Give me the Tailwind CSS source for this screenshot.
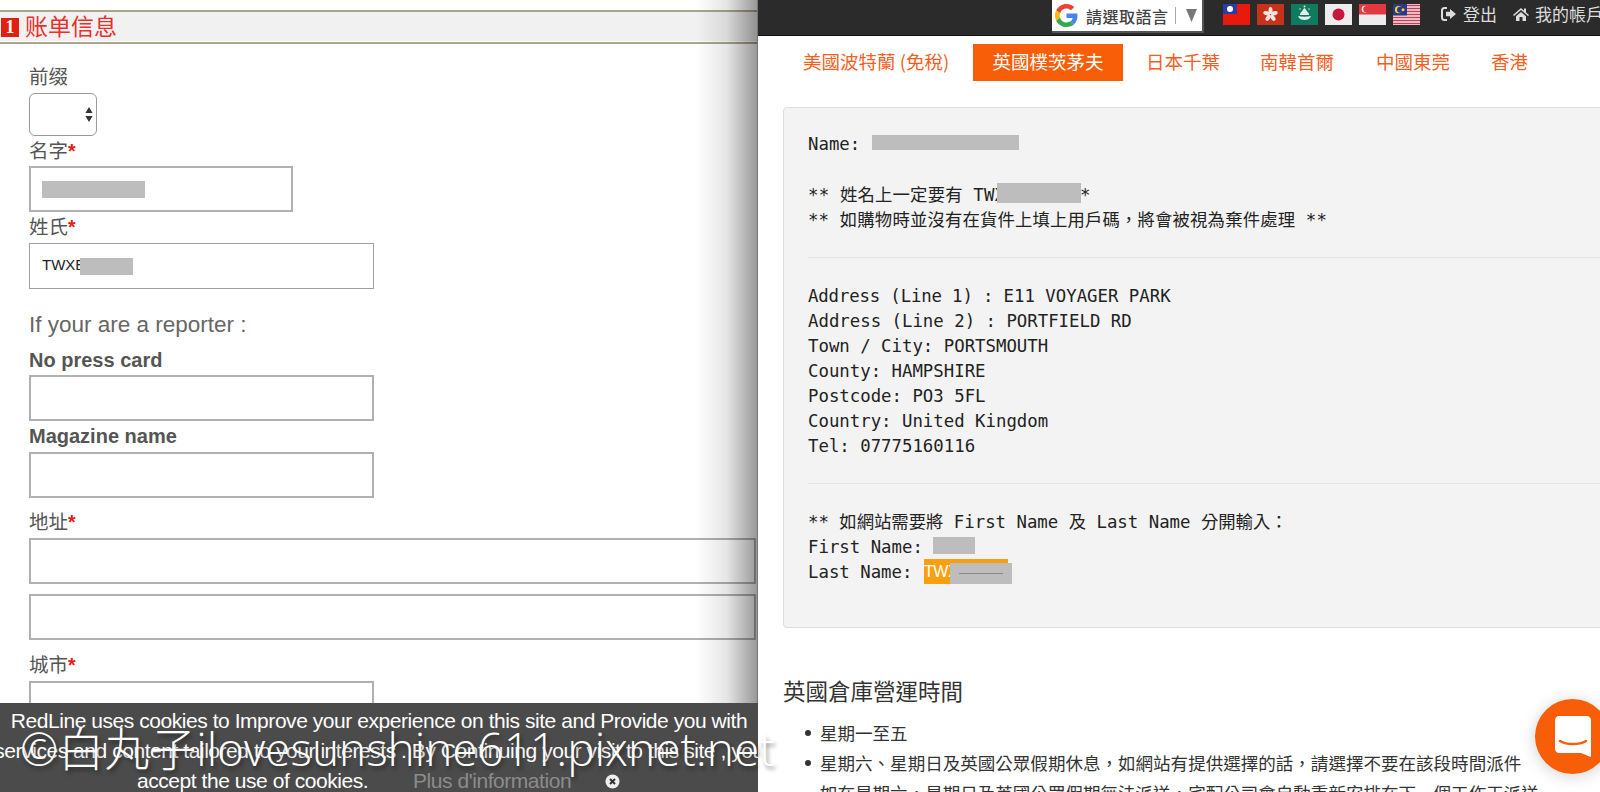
<!DOCTYPE html>
<html lang="en">
<head>
  <meta charset="UTF-8" />
  <title>账单信息</title>
  <script src="https://cdn.jsdelivr.net/npm/@tailwindcss/browser@4"></script>
</head>
<body class="bg-white overflow-hidden">
  <div class="relative flex w-[1600px] h-[792px] overflow-hidden">

    <!-- Left: billing form -->
    <div class="relative w-[758px] h-full shrink-0 overflow-hidden bg-white font-['Liberation_Sans','Noto_Sans_CJK_SC',sans-serif] text-[#555]">
      <div class="mt-[10px] h-[34px] border-y-2 border-[#aaa68c] bg-[#f1f1f1] flex items-center pl-[1px] shadow-[inset_0_-1px_0_#fff]">
        <span class="w-[18px] h-[19px] bg-[#e3200f] text-white text-[18px] font-bold leading-[19px] text-center font-['Liberation_Serif',serif]">1</span>
        <span class="ml-[6px] text-[23px] leading-[30px] text-[#e9302a]">账单信息</span>
      </div>

      <div class="pl-[29px] pt-[18px]">
        <div class="h-[31px] text-[19.5px] leading-[30px]">前缀</div>
        <div class="w-[68px] h-[43px] border border-[#999] rounded-[6px] flex items-center justify-end pr-[3px]">
          <svg width="8" height="15" viewBox="0 0 8 15"><path d="M4 0l3.600 6H.4zM4 15L.4 9h7.200z" fill="#333"/></svg>
        </div>

        <div class="h-[30px] text-[19.5px] leading-[31px]">名字<b class="text-[#e3200f]">*</b></div>
        <div class="w-[264px] h-[46px] border-2 border-[#b0b0b0] pl-[11px] flex items-center">
          <span class="w-[103px] h-[17px] bg-[#bdbdbd]"></span>
        </div>

        <div class="h-[31px] text-[19.5px] leading-[30px]">姓氏<b class="text-[#e3200f]">*</b></div>
        <div class="w-[345px] h-[46px] border-[1.5px] border-[#a0a0a0] pl-[12px] flex items-center text-[15px] leading-[18px] text-[#222]">
          <span class="w-[38px] overflow-hidden -mt-[2px]">TWXE</span><span class="w-[53px] h-[17px] bg-[#bdbdbd]"></span>
        </div>

        <div class="mt-[22px] h-[28px] text-[22.5px] leading-[28px] text-[#666]">If your are a reporter :</div>
        <div class="mt-[7px] h-[29px] text-[20px] leading-[28px] font-bold">No press card</div>
        <div class="w-[345px] h-[46px] border-2 border-[#b0b0b0]"></div>
        <div class="h-[31px] text-[20px] leading-[30px] font-bold">Magazine name</div>
        <div class="w-[345px] h-[46px] border-2 border-[#b0b0b0]"></div>

        <div class="h-[40px] pt-[9px] text-[19.5px] leading-[30px]">地址<b class="text-[#e3200f]">*</b></div>
        <div class="w-[727px] h-[46px] border-2 border-[#b0b0b0]"></div>
        <div class="mt-[10px] w-[727px] h-[46px] border-2 border-[#b0b0b0]"></div>
        <div class="h-[41px] pt-[10px] text-[19.5px] leading-[30px]">城市<b class="text-[#e3200f]">*</b></div>
        <div class="w-[345px] h-[46px] border-2 border-[#b0b0b0]"></div>
      </div>

      <!-- shadow from the right panel -->
      <div class="absolute top-0 right-0 w-[62px] h-full bg-gradient-to-r from-black/0 via-black/10 to-black/40 border-r border-[#777]"></div>

      <!-- cookie bar -->
      <div class="absolute left-0 right-0 top-[703px] h-[89px] bg-[#4b4b4b] text-white text-center text-[21px] tracking-[-0.45px] leading-[30px] pt-[3px] whitespace-nowrap">
        <div>RedLine uses cookies to Improve your experience on this site and Provide you with</div>
        <div class="flex justify-center"><span class="shrink-0">services and content tailored to your interests . By Continuing your visit to this site , you</span></div>
        <div class="relative">
          <span class="absolute left-[137px]">accept the use of cookies.</span>
          <span class="absolute left-[413px] text-[#8b8b8b]">Plus d'information</span>
          <svg class="absolute left-[605px] top-[8px]" width="15" height="15" viewBox="0 0 15 15"><circle cx="7.500" cy="7.500" r="7" fill="#eee"/><path d="M5 5l5 5M10 5l-5 5" stroke="#333" stroke-width="2"/></svg>
        </div>
      </div>
    </div>

    <!-- Right: warehouse addresses -->
    <div class="flex-1 min-w-0 h-full overflow-hidden bg-white font-['DejaVu_Sans','Noto_Sans_CJK_TC',sans-serif] text-[#333]">
      <div class="h-[36px] bg-[#2b2b2b] border-b border-[#111] flex items-start text-[#ddd] text-[17px] whitespace-nowrap">
        <div class="ml-[294px] w-[152px] shrink-0 h-[33px] bg-white border-r-2 border-b-2 border-[#555] flex items-center pl-[3px] text-[#444] text-[16px] font-['Noto_Sans_CJK_TC',sans-serif] font-medium">
          <svg width="23" height="23" viewBox="0 0 48 48"><path fill="#EA4335" d="M24 9.500c3.500 0 6.700 1.200 9.200 3.600l6.900-6.900C35.900 2.400 30.500 0 24 0 14.600 0 6.500 5.400 2.600 13.200l8 6.200C12.400 13.700 17.700 9.500 24 9.500z"/><path fill="#4285F4" d="M46.900 24.500c0-1.600-.2-3.100-.4-4.500H24v9h12.900c-.6 3-2.200 5.500-4.700 7.200l7.700 6c4.500-4.200 7-10.300 7-17.700z"/><path fill="#FBBC05" d="M10.500 28.600c-.5-1.400-.8-3-.8-4.600s.3-3.200.8-4.600l-8-6.200C.9 16.500 0 20.100 0 24s.9 7.500 2.600 10.800l7.900-6.200z"/><path fill="#34A853" d="M24 48c6.500 0 11.900-2.100 15.900-5.800l-7.700-6c-2.100 1.400-4.900 2.300-8.200 2.300-6.300 0-11.600-4.200-13.500-10l-8 6.200C6.500 42.600 14.600 48 24 48z"/></svg>
          <span class="ml-[8px] tracking-[0.5px]">請選取語言</span>
          <span class="ml-[6px] w-px h-[17px] bg-[#aaa]"></span>
          <svg class="ml-[10px]" width="11" height="13" viewBox="0 0 11 13"><path d="M0 0h11L5.500 13z" fill="#777"/></svg>
        </div>

        <div class="ml-[19px] mt-[4px] shrink-0 flex gap-[7px]">
          <!-- TW -->
          <svg class="w-[27px] h-[21px]" viewBox="0 0 27 21"><rect width="27" height="21" fill="#e81a0c"/><rect width="14" height="10" fill="#2a3ca8"/><circle cx="7" cy="5" r="3" fill="#fff"/></svg>
          <!-- HK -->
          <svg class="w-[27px] h-[21px]" viewBox="0 0 27 21"><rect width="27" height="21" fill="#c8321a"/><g fill="#f3e4df"><ellipse cx="13.500" cy="6.500" rx="2" ry="3.500"/><ellipse cx="13.500" cy="6.500" rx="2" ry="3.500" transform="rotate(72 13.500 10.500)"/><ellipse cx="13.500" cy="6.500" rx="2" ry="3.500" transform="rotate(144 13.500 10.500)"/><ellipse cx="13.500" cy="6.500" rx="2" ry="3.500" transform="rotate(216 13.500 10.500)"/><ellipse cx="13.500" cy="6.500" rx="2" ry="3.500" transform="rotate(288 13.500 10.500)"/></g></svg>
          <!-- MO -->
          <svg class="w-[27px] h-[21px]" viewBox="0 0 27 21"><rect width="27" height="21" fill="#0e7a5e"/><path d="M7 12c4 1 9 1 13 0-1 3-4 4-6.500 4S8 15 7 12z" fill="#e4efe9"/><path d="M9 11c0-2 1-3 2-3.500.5-1.500 1.500-2.500 2.500-3.500 1 1 2 2 2.500 3.500 1 .5 2 1.500 2 3.500z" fill="#e4efe9"/><circle cx="13.500" cy="2.500" r="1" fill="#dde6c8"/><circle cx="9" cy="5" r=".8" fill="#dde6c8"/><circle cx="18" cy="5" r=".8" fill="#dde6c8"/></svg>
          <!-- JP -->
          <svg class="w-[27px] h-[21px]" viewBox="0 0 27 21"><rect width="27" height="21" fill="#ededed"/><circle cx="13.500" cy="10.500" r="6" fill="#c8163c"/></svg>
          <!-- SG -->
          <svg class="w-[27px] h-[21px]" viewBox="0 0 27 21"><rect width="27" height="21" fill="#ececec"/><rect width="27" height="10.500" fill="#e2383f"/><circle cx="6" cy="5.200" r="3.400" fill="#f7e4e4"/><circle cx="7.500" cy="5.200" r="3.200" fill="#e2383f"/></svg>
          <!-- MY -->
          <svg class="w-[27px] h-[21px]" viewBox="0 0 27 21"><rect width="27" height="21" fill="#ececec"/><path d="M0 1.500h27M0 4.500h27M0 7.500h27M0 10.500h27M0 13.500h27M0 16.500h27M0 19.500h27" stroke="#cf3a50" stroke-width="1.500"/><rect width="14" height="11.500" fill="#27398f"/><circle cx="5.500" cy="5.700" r="3.600" fill="#f5cf2d"/><circle cx="7" cy="5.700" r="3" fill="#27398f"/><circle cx="10" cy="5.700" r="1.500" fill="#f5cf2d"/></svg>
        </div>

        <div class="ml-[21px] mt-[3px] shrink-0 h-[22px] flex items-center font-['Noto_Sans_CJK_TC',sans-serif]">
          <svg width="16" height="14" viewBox="0 0 16 14"><path d="M6 1H3.500C2 1 1 2 1 3.500v7C1 12 2 13 3.500 13H6" fill="none" stroke="#ddd" stroke-width="2"/><path d="M9 2l6 5-6 5V9.200H5V4.800h4z" fill="#ddd"/></svg>
          <span class="ml-[6px]">登出</span>
          <svg class="ml-[16px]" width="16" height="14" viewBox="0 0 16 14"><path d="M8 1L0 8l1 1 7-6 7 6 1-1-3-2.600V1.500h-2v2.200zM3 9.200L8 5l5 4.200V14H9.500V10h-3v4H3z" fill="#ddd"/></svg>
          <span class="ml-[6px]">我的帳戶</span>
        </div>
      </div>

      <!-- warehouse tabs -->
      <div class="mt-[8px] pl-[45px] h-[37px] flex items-start leading-[35px] text-[18.500px] text-[#f45f1f] whitespace-nowrap font-['Noto_Sans_CJK_TC',sans-serif]">
        <span class="w-[149px]">美國波特蘭 (免稅)</span>
        <span class="ml-[21px] w-[150px] h-[37px] text-center bg-[#f85e08] text-white">英國樸茨茅夫</span>
        <span class="ml-[23px]">日本千葉</span>
        <span class="ml-[40px]">南韓首爾</span>
        <span class="ml-[42px]">中國東莞</span>
        <span class="ml-[41px]">香港</span>
      </div>

      <pre class="mt-[26px] ml-[25px] w-[900px] h-[521px] pt-[25px] pl-[24px] bg-[#f3f3f3] border border-[#ddd] rounded-[4px] text-[17.350px] leading-[25px] text-[#222] font-['DejaVu_Sans_Mono','Noto_Sans_CJK_TC',monospace]"><div class="relative -mt-[1px]">Name: <span class="absolute left-[64px] top-[3px] w-[147px] h-[15px] bg-[#bdbdbd]"></span></div><div class="h-[26px]"></div><div class="relative tracking-[0.2px]">** 姓名上一定要有 TWX<span class="absolute left-[189px] top-0 w-[84px] h-[20px] bg-[#bdbdbd]"></span><span class="absolute left-[272px]">*</span></div><div class="tracking-[0.17px]">** 如購物時並沒有在貨件上填上用戶碼，將會被視為棄件處理 **</div><hr class="mt-[24px] mb-[26px] border-[#e4e4e4]"/><div><span class="tracking-[-0.15px]">Address (Line 1) : </span>E11 VOYAGER PARK</div><div>Address (Line 2) : PORTFIELD RD</div><div>Town / City: PORTSMOUTH</div><div>County: HAMPSHIRE</div><div>Postcode: PO3 5FL</div><div>Country: United Kingdom</div><div>Tel: 07775160116</div><hr class="mt-[24px] mb-[26px] border-[#e4e4e4]"/><div>** 如網站需要將 First Name 及 Last Name 分開輸入：</div><div class="relative">First Name: <span class="absolute left-[125px] top-[2px] w-[42px] h-[17px] bg-[#bdbdbd]"></span></div><div class="relative">Last Name: <span class="absolute left-[116px] top-[-1px] w-[84px] h-[25px] bg-[#f89f10] text-white text-[16px] tracking-[-0.5px] overflow-hidden font-['Liberation_Sans',sans-serif]">TWX</span><span class="absolute left-[142px] top-[3px] w-[62px] h-[21px] bg-[#bdbdbd] flex items-center justify-center"><span class="w-[44px] h-px bg-[#888]"></span></span></div></pre>

      <h3 class="mt-[47px] ml-[25px] text-[22.500px] leading-[30px] text-[#333] font-['Noto_Sans_CJK_TC',sans-serif]">英國倉庫營運時間</h3>
      <ul class="mt-[13px] ml-[62px] text-[17.550px] leading-[30px] text-[#333] font-['Noto_Sans_CJK_TC',sans-serif] whitespace-nowrap">
        <li class="relative"><span class="absolute -left-[15px] top-[12px] w-[6px] h-[6px] rounded-full bg-[#333]"></span>星期一至五</li>
        <li class="relative"><span class="absolute -left-[15px] top-[12px] w-[6px] h-[6px] rounded-full bg-[#333]"></span>星期六、星期日及英國公眾假期休息，如網站有提供選擇的話，請選擇不要在該段時間派件</li>
        <li>如在星期六，星期日及英國公眾假期無法派送，宅配公司會自動重新安排在下一個工作天派送</li>
      </ul>
    </div>

    <!-- watermark over the screenshot -->
    <div class="absolute left-[20px] top-[718px] text-[46px] leading-[60px] font-light text-white whitespace-nowrap font-['Open_Sans','Noto_Sans_CJK_TC',sans-serif] [text-shadow:2px_3px_4px_rgba(0,0,0,0.45)]">©白丸子ilovesunshine611.pixnet.net</div>

    <!-- chat button -->
    <div class="absolute left-[1535px] top-[699px] w-[75px] h-[75px] rounded-full bg-[#f85e08] shadow-[0_2px_16px_rgba(0,0,0,0.18)]">
      <svg class="absolute left-[20px] top-[17px]" width="36" height="41" viewBox="0 0 36 41"><path d="M4 0h28c2 0 4 2 4 4v37l-10-4H4c-2 0-4-2-4-4V4c0-2 2-4 4-4z" fill="#fff"/><path d="M5 25c7 4 19 4 26 0" fill="none" stroke="#f85e08" stroke-width="2.500" stroke-linecap="round"/></svg>
    </div>
  </div>
</body>
</html>
